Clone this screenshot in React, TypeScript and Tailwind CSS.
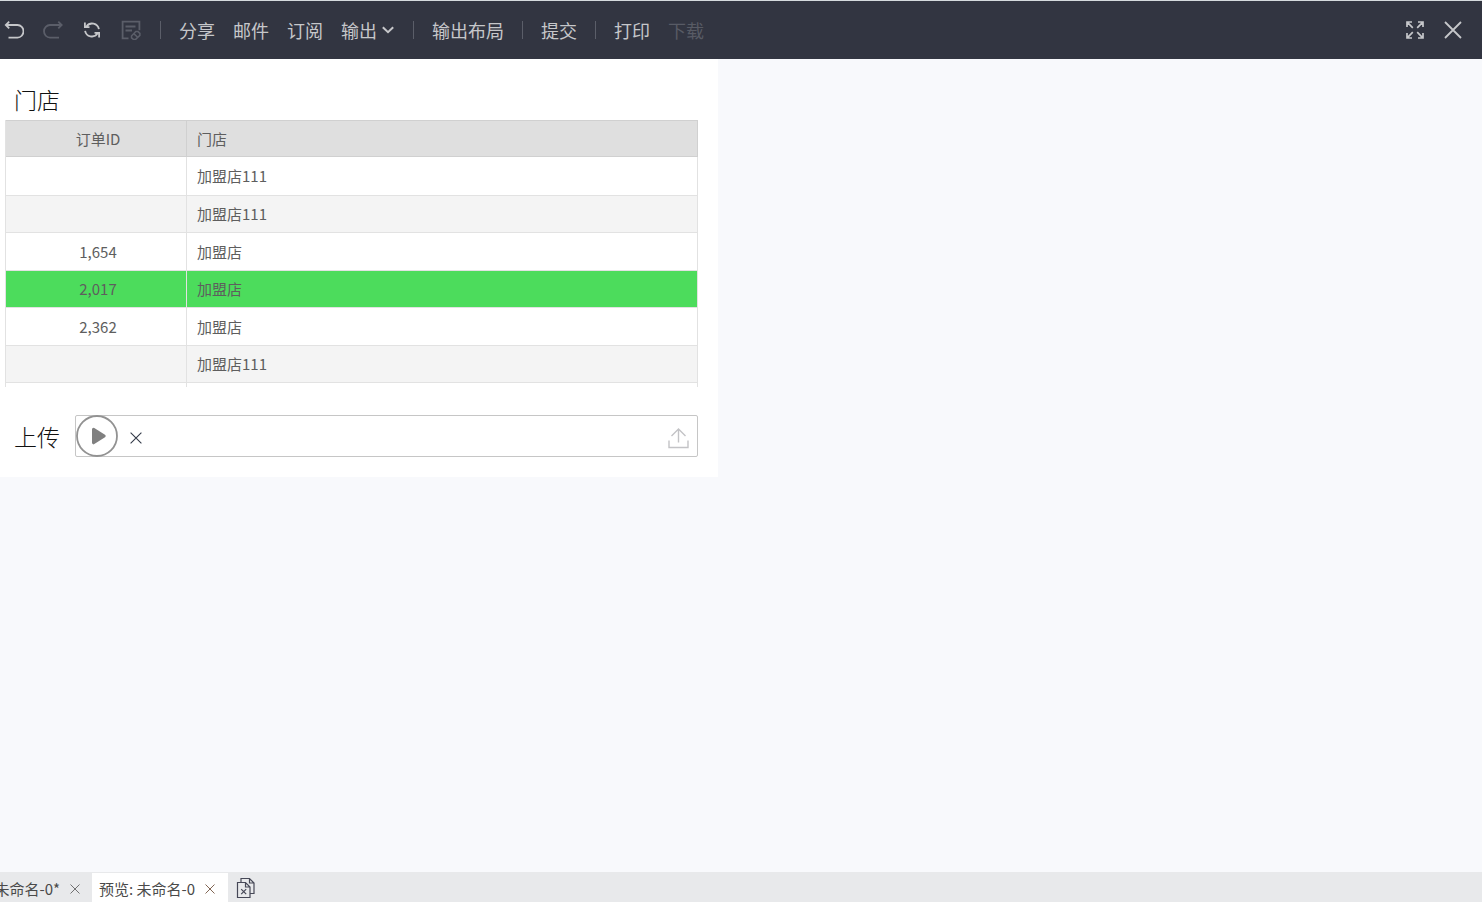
import React from "react";

type Row = { id: string; store: string; selected?: boolean };

const rows: Row[] = [
  { id: "", store: "加盟店111" },
  { id: "", store: "加盟店111" },
  { id: "1,654", store: "加盟店" },
  { id: "2,017", store: "加盟店", selected: true },
  { id: "2,362", store: "加盟店" },
  { id: "", store: "加盟店111" },
  { id: "", store: "" },
];

function Separator() {
  return <span aria-hidden="true" className="h-[18px] w-px shrink-0 bg-[#5b5e69]" />;
}

function Icon({ children }: { children: React.ReactNode }) {
  return (
    <svg viewBox="0 0 20 20" className="block size-5" fill="none" stroke="currentColor" strokeWidth="1.8" aria-hidden="true">
      {children}
    </svg>
  );
}

function Cross({ className }: { className: string }) {
  return (
    <svg viewBox="0 0 12 12" className={className} fill="none" stroke="currentColor" strokeWidth="1.1" aria-hidden="true">
      <path d="M.6.6l10.8 10.8M11.4.6L.6 11.4" />
    </svg>
  );
}

function Toolbar() {
  return (
    <header className="flex h-[59px] shrink-0 items-center justify-between border-t border-[#d5dadd] bg-[#323541] pr-5 pl-1 text-lg leading-6 text-[#c6c7ca]">
      <div className="flex items-center gap-[18px] whitespace-nowrap">
        <div className="flex items-center gap-[19px] pr-px">
          <button type="button" aria-label="撤销">
            <Icon>
              <path d="M5.2 1.6L1.8 5l3.4 3.4M2 5h11.5a6 6.3 0 010 12.6H4.5" />
            </Icon>
          </button>
          <button type="button" aria-label="重做" disabled className="text-[#5b5e69]">
            <Icon>
              <path d="M15.3 1.6L18.7 5l-3.4 3.4M18.5 5H7a6 6.3 0 000 12.6h9" />
            </Icon>
          </button>
          <button type="button" aria-label="刷新">
            <Icon>
              <path d="M4.5 6.4A6.9 6.9 0 0116.9 9.2M15.5 13.6A6.9 6.9 0 013.1 10.8M2.9 2.6v4.6h4.6M17.1 17.4v-4.6h-4.6" />
            </Icon>
          </button>
          <button type="button" aria-label="编辑" disabled className="text-[#5b5e69]">
            <Icon>
              <path d="M7.5 18.4H1.6V1.6h16.8v8.6M4.5 6.5h10M4.5 10.5h6.5" />
              <path d="M10.5 16l4.3-4.4h2.2l1.9 1.8v2l-4.3 4h-2.2l-1.9-1.6zM12.8 13.6l3.8 3.6" strokeWidth="1.5" />
            </Icon>
          </button>
        </div>
        <Separator />
        <button type="button">分享</button>
        <button type="button">邮件</button>
        <button type="button">订阅</button>
        <button type="button" className="flex items-center gap-[5px] pr-px">
          输出
          <svg viewBox="0 0 12 8" className="h-2 w-3" fill="none" stroke="currentColor" strokeWidth="2" aria-hidden="true">
            <path d="M.8 1.2L6 6.2l5.2-5" />
          </svg>
        </button>
        <Separator />
        <button type="button">输出布局</button>
        <Separator />
        <button type="button">提交</button>
        <Separator />
        <button type="button">打印</button>
        <button type="button" disabled className="text-[#585b65]">下载</button>
      </div>
      <div className="flex items-center gap-5">
        <button type="button" aria-label="全屏">
          <svg viewBox="0 0 18 18" className="block size-[18px]" fill="none" stroke="currentColor" strokeWidth="1.7" aria-hidden="true">
            <path d="M1 6V1h5M12 1h5v5M17 12v5h-5M6 17H1v-5M1.2 1.2l5.6 5.6M16.8 1.2l-5.6 5.6M16.8 16.8l-5.6-5.6M1.2 16.8l5.6-5.6" />
          </svg>
        </button>
        <button type="button" aria-label="关闭">
          <svg viewBox="0 0 18 18" className="block size-[18px]" fill="none" stroke="currentColor" strokeWidth="1.8" aria-hidden="true">
            <path d="M1 1l16 16M17 1L1 17" />
          </svg>
        </button>
      </div>
    </header>
  );
}

function StoreTable() {
  return (
    <div className="h-[267px] overflow-hidden">
      <table className="w-full table-fixed border-separate border-spacing-0 border-l border-[#e2e2e2] text-[15px] leading-5 text-[#5e5e5e]">
        <thead>
          <tr className="h-[37px] bg-[#dfdfdf]">
            <th scope="col" className="w-[181px] border-y border-r border-[#d0d0d0] pl-1 text-center font-normal">订单ID</th>
            <th scope="col" className="border-y border-r border-[#d0d0d0] pl-2.5 text-left font-normal">门店</th>
          </tr>
        </thead>
        <tbody>
          {rows.map((row, i) => (
            <tr
              key={i}
              className={
                row.selected
                  ? "h-[37px] bg-[#4cdc5c]"
                  : i % 2
                    ? "h-[37px] bg-[#f4f4f4]"
                    : "h-[38px] bg-white first:h-[39px]"
              }
            >
              <td className="border-r border-b border-[#e2e2e2] pl-1 text-center">{row.id}</td>
              <td className="border-r border-b border-[#e2e2e2] pl-2.5">{row.store}</td>
            </tr>
          ))}
        </tbody>
      </table>
    </div>
  );
}

function UploadField() {
  return (
    <div className="mt-7 flex items-center">
      <h2 id="upload-label" className="w-[70px] pl-[9px] text-[23px] leading-8 font-light text-[#111111]">上传</h2>
      <div role="group" aria-labelledby="upload-label" className="flex h-[42px] flex-1 items-center rounded-xs border border-[#c6c6c6] pr-2">
        <button type="button" aria-label="播放">
          <svg viewBox="0 0 42 42" className="block size-[42px]" aria-hidden="true">
            <circle cx="21" cy="21" r="20" fill="none" stroke="#929292" strokeWidth="1.8" />
            <path d="M17.5 14.2L28.2 20.9L17.5 27.8z" fill="#808080" stroke="#808080" strokeWidth="3" strokeLinejoin="round" />
          </svg>
        </button>
        <button type="button" aria-label="移除" className="mt-1 ml-3 text-[#333a48]">
          <Cross className="block size-3" />
        </button>
        <button type="button" aria-label="上传文件" className="mt-1 ml-auto text-[#c3c3c6]">
          <svg viewBox="0 0 22 22" className="block size-[22px]" fill="none" stroke="currentColor" strokeWidth="1.4" aria-hidden="true">
            <path d="M11.5 15.5V2M4.5 9l7-7 7 7M2 13.5v7h19v-7" />
          </svg>
        </button>
      </div>
    </div>
  );
}

function BottomTabs() {
  return (
    <nav aria-label="标签页" className="flex h-[30px] shrink-0 items-stretch bg-[#e8e9eb] text-[15px] leading-5 whitespace-nowrap text-[#4a4a4a]">
      <div className="flex w-[92px] items-center justify-end gap-2.5 overflow-hidden pt-[3px] pr-3">
        <button type="button">未命名-0*</button>
        <button type="button" aria-label="关闭 未命名-0" className="text-[#666666]">
          <Cross className="block size-2.5" />
        </button>
      </div>
      <div className="mt-px flex items-center gap-2.5 bg-white pt-0.5 pr-[13px] pl-[7px]">
        <button type="button">预览: 未命名-0</button>
        <button type="button" aria-label="关闭 预览" className="text-[#765844]">
          <Cross className="block size-2.5" />
        </button>
      </div>
      <button type="button" aria-label="关闭全部" className="ml-2 pt-0.5 text-[#464857]">
        <svg viewBox="0 0 20 22" className="block h-[22px] w-5" fill="none" stroke="currentColor" strokeWidth="1.2" aria-hidden="true">
          <path d="M1.5 5.5h8l4.5 4.5v10.5H1.5zM9.5 5.5V10H14" />
          <path d="M5 5.5V1.5h8.5L18 6v10.5h-4M13.5 1.5V6H18" />
          <path d="M5.2 12.2l5 5M10.2 12.2l-5 5" />
        </svg>
      </button>
    </nav>
  );
}

export default function App() {
  return (
    <div className="flex min-h-screen flex-col bg-[#f8f9fc] font-['Noto_Sans_CJK_SC',sans-serif]">
      <Toolbar />
      <main className="flex-1">
        <section className="w-full max-w-[718px] bg-white pt-6 pr-5 pb-5 pl-[5px]">
          <h1 className="mb-[5px] pl-[9px] text-[23px] leading-8 font-light text-[#111111]">门店</h1>
          <StoreTable />
          <UploadField />
        </section>
      </main>
      <BottomTabs />
    </div>
  );
}
